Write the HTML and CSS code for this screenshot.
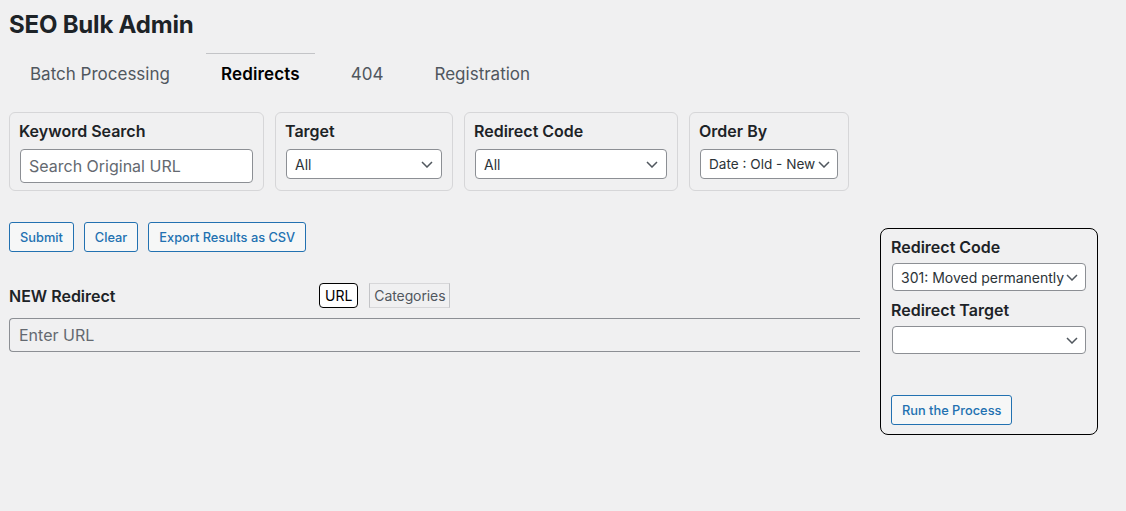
FILE: index.html
```html
<!DOCTYPE html>
<html>
<head>
<meta charset="utf-8">
<link rel="stylesheet" href="styles.css">
</head>
<body>
<div class="page">
  <h1 class="title">SEO Bulk Admin</h1>
  <nav class="tabs">
    <span class="tab">Batch Processing</span>
    <span class="tab active">Redirects</span>
    <span class="tab">404</span>
    <span class="tab">Registration</span>
  </nav>
  <div class="filters">
    <div class="fbox fb-keyword">
      <div class="flabel">Keyword Search</div>
      <div class="input big"><span class="ph">Search Original URL</span></div>
    </div>
    <div class="fbox fb-target">
      <div class="flabel">Target</div>
      <div class="select"><span>All</span><svg class="chev" viewBox="0 0 12 7" width="12" height="7"><path d="M1 1l5 5 5-5" fill="none" stroke="#50575e" stroke-width="1.5"/></svg></div>
    </div>
    <div class="fbox fb-code">
      <div class="flabel">Redirect Code</div>
      <div class="select"><span>All</span><svg class="chev" viewBox="0 0 12 7" width="12" height="7"><path d="M1 1l5 5 5-5" fill="none" stroke="#50575e" stroke-width="1.5"/></svg></div>
    </div>
    <div class="fbox fb-order">
      <div class="flabel">Order By</div>
      <div class="select tight"><span>Date : Old - New</span><svg class="chev" viewBox="0 0 12 7" width="12" height="7"><path d="M1 1l5 5 5-5" fill="none" stroke="#50575e" stroke-width="1.5"/></svg></div>
    </div>
  </div>
  <div class="main">
    <div class="left">
      <div class="actions">
        <span class="btn">Submit</span>
        <span class="btn">Clear</span>
        <span class="btn">Export Results as CSV</span>
      </div>
      <div class="newrow">
        <span class="newlabel">NEW Redirect</span>
        <span class="toggle on">URL</span>
        <span class="toggle off">Categories</span>
      </div>
      <div class="urlinput"><span class="ph">Enter URL</span></div>
    </div>
    <div class="panel">
      <div class="plabel">Redirect Code</div>
      <div class="select psel"><span>301: Moved permanently</span><svg class="chev" viewBox="0 0 12 7" width="12" height="7"><path d="M1 1l5 5 5-5" fill="none" stroke="#50575e" stroke-width="1.5"/></svg></div>
      <div class="plabel second">Redirect Target</div>
      <div class="select psel"><span></span><svg class="chev" viewBox="0 0 12 7" width="12" height="7"><path d="M1 1l5 5 5-5" fill="none" stroke="#50575e" stroke-width="1.5"/></svg></div>
      <span class="btn run">Run the Process</span>
    </div>
  </div>
</div>
</body>
</html>
```
FILE: styles.css
```css
* { box-sizing: border-box; }
html, body { margin: 0; padding: 0; }
body {
  background: #f0f0f1;
  font-family: Inter, "Noto Sans", "Liberation Sans", sans-serif;
  color: #1d2327;
  width: 1126px;
  height: 511px;
  overflow: hidden;
}
.page { padding: 0 0 0 9px; }
.title {
  margin: 0;
  padding-top: 10px;
  font-size: 24px;
  line-height: 30px;
  font-weight: 700;
  letter-spacing: -0.2px;
  color: #1d2327;
}
.tabs {
  display: flex;
  margin-top: 13px;
  margin-left: 6px;
  gap: 21px;
}
.tab {
  padding: 9px 15px 0 15px;
  height: 42px;
  font-size: 17px;
  line-height: 22px;
  color: #50575e;
  border-top: 1px solid transparent;
}
.tab.active {
  color: #000;
  font-weight: 600;
  letter-spacing: 0.15px;
  border-top-color: #c3c4c7;
}
.filters {
  display: flex;
  gap: 11px;
  margin-top: 17px;
}
.fbox {
  border: 1px solid #d6d6d8;
  border-radius: 6px;
  padding: 8px 10px 8px 9px;
  height: 79px;
}
.fb-keyword { width: 255px; }
.fb-target { width: 178px; }
.fb-code { width: 214px; }
.fb-order { width: 160px; }
.flabel {
  font-size: 16px;
  font-weight: 600;
  line-height: 20px;
  color: #1d2327;
}
.input {
  margin-top: 8px;
  margin-left: 1px;
  height: 34px;
  border: 1px solid #8c8f94;
  border-radius: 4px;
  background: #fff;
  padding: 0 8px;
  display: flex;
  align-items: center;
  font-size: 16px;
}
.ph { color: #646970; }
.select {
  margin-top: 8px;
  margin-left: 1px;
  height: 30px;
  border: 1px solid #8c8f94;
  border-radius: 4px;
  background: #fff;
  padding: 0 8px;
  display: flex;
  align-items: center;
  justify-content: space-between;
  font-size: 14px;
  color: #2c3338;
}
.select.tight { padding: 0 7px 0 8px; font-size: 13.6px; }
.chev { flex: none; width: 12px; height: 7px; }
.main {
  display: flex;
  align-items: flex-start;
  margin-top: 31px;
}
.left { width: 851px; }
.actions { display: flex; gap: 10px; }
.btn {
  display: inline-flex;
  align-items: center;
  height: 30px;
  padding: 0 10px;
  border: 1px solid #2271b1;
  border-radius: 3px;
  background: #f6f7f7;
  color: #2271b1;
  font-size: 12.8px;
  font-weight: 500;
}
.newrow {
  display: flex;
  align-items: center;
  margin-top: 31px;
  height: 25px;
}
.newlabel {
  width: 310px;
  font-size: 16px;
  font-weight: 600;
  color: #1d2327;
}
.toggle {
  height: 25px;
  display: inline-flex;
  align-items: center;
  font-size: 14px;
  padding: 0 5px;
}
.toggle.on {
  border: 1px solid #000;
  border-radius: 4px;
  background: #fff;
  color: #000;
}
.toggle.off {
  margin-left: 11px;
  border: 1px solid #c3c4c7;
  border-top-color: #d7d7d9;
  border-bottom-color: #d7d7d9;
  color: #50575e;
  padding: 0 4px;
  letter-spacing: -0.1px;
}
.urlinput {
  margin-top: 10px;
  height: 34px;
  border: 1px solid #8c8f94;
  border-right: none;
  border-radius: 4px 0 0 4px;
  display: flex;
  align-items: center;
  padding-left: 9px;
  font-size: 16px;
}
.panel {
  margin-left: 20px;
  margin-top: 6px;
  width: 218px;
  height: 207px;
  border: 1px solid #000;
  border-radius: 8px;
  padding: 8px 11px 0 10px;
}
.plabel {
  font-size: 16px;
  font-weight: 600;
  line-height: 20px;
  color: #1d2327;
}
.plabel.second { margin-top: 9px; }
.psel { margin-top: 6px; height: 28px; padding-right: 7px; }
.psel span { white-space: nowrap; }
.btn.run { margin-top: 41px; }
```
